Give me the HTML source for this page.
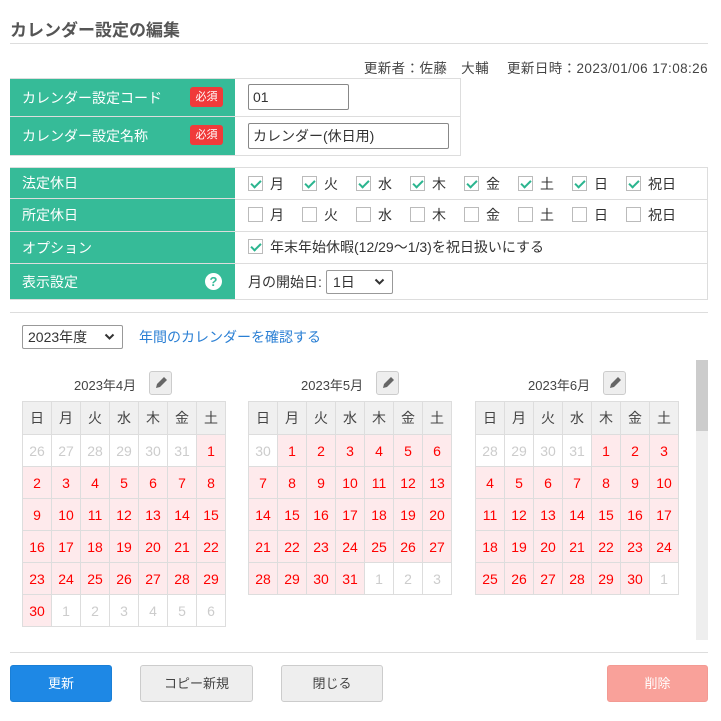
<!DOCTYPE html>
<html><head><meta charset="utf-8"><style>
*{box-sizing:border-box;margin:0;padding:0}
body{width:721px;height:721px;background:#fff;font-family:"Liberation Sans","Noto Sans CJK JP",sans-serif;color:#333;position:relative;overflow:hidden;font-size:13px}
.a{position:absolute}
.lbl{position:absolute;background:#36bb98;color:#fff;font-size:14px;padding-left:12px;display:flex;align-items:center;border-bottom:1px solid #ddd}
.val{position:absolute;border:1px solid #ddd;border-left:none;background:#fff}
.req{position:absolute;background:#f03a3a;color:#fff;font-size:11px;border-radius:3px;width:33px;height:20px;line-height:20px;text-align:center}
.inp{position:absolute;border:1px solid #888;border-radius:2px;height:26px;font-size:14px;padding-left:4px;line-height:24px;background:#fff}
.cb{position:absolute;width:15px;height:15px;border:1px solid #bbb;background:#fff}
.cb.on::after{content:"";position:absolute;left:4px;top:1px;width:4px;height:8px;border:solid #2bb58f;border-width:0 2px 2px 0;transform:rotate(45deg)}
.cbt{position:absolute;font-size:14px;color:#333}
table.cal{position:absolute;border-collapse:collapse;font-size:14px}
table.cal td{width:29px;height:32px;border:1px solid #ddd;text-align:center;color:#f00;background:#feeaec}
table.cal tr.h td{background:#f0f0f0;color:#444;height:33px}
table.cal td.g{color:#ccc;background:#fff}
.mt{position:absolute;font-size:13px;color:#444}
.pen{position:absolute;width:23px;height:24px;border:1px solid #ccc;border-radius:3px;background:#eee}
.btn{position:absolute;top:665px;height:37px;border-radius:3px;font-size:13px;text-align:center;line-height:35px}
.chev{position:absolute;right:7px;top:7px}
</style></head><body>
<div class="a" style="left:10px;top:16px;font-size:17px;font-weight:bold;color:#555">カレンダー設定の編集</div>
<div class="a" style="left:10px;top:43px;width:698px;height:1px;background:#ddd"></div>
<div class="a" style="right:13px;top:57px;font-size:13.5px;letter-spacing:0.4px;color:#444;white-space:pre">更新者：佐藤　大輔　 更新日時：2023/01/06 17:08:26</div>

<div class="lbl" style="left:10px;top:78px;width:225px;height:39px;border-top:1px solid #ddd">カレンダー設定コード</div>
<div class="req" style="left:190px;top:87px">必須</div>
<div class="val" style="left:235px;top:78px;width:226px;height:39px"></div>
<div class="inp" style="left:248px;top:84px;width:101px">01</div>
<div class="lbl" style="left:10px;top:117px;width:225px;height:39px">カレンダー設定名称</div>
<div class="req" style="left:190px;top:125px">必須</div>
<div class="val" style="left:235px;top:116px;width:226px;height:40px"></div>
<div class="inp" style="left:248px;top:123px;width:201px">カレンダー(休日用)</div>

<div class="lbl" style="left:10px;top:167px;width:225px;height:32px;border-top:1px solid #ddd">法定休日</div>
<div class="val" style="left:235px;top:167px;width:473px;height:33px"></div>
<div class="lbl" style="left:10px;top:199px;width:225px;height:33px">所定休日</div>
<div class="val" style="left:235px;top:199px;width:473px;height:33px"></div>
<div class="lbl" style="left:10px;top:232px;width:225px;height:32px">オプション</div>
<div class="val" style="left:235px;top:231px;width:473px;height:33px"></div>
<div class="lbl" style="left:10px;top:264px;width:225px;height:36px">表示設定</div>
<div class="a" style="left:205px;top:273px;width:17px;height:17px;border-radius:50%;background:#fff;color:#36bb98;font-weight:bold;font-size:13px;line-height:17px;text-align:center">?</div>
<div class="val" style="left:235px;top:263px;width:473px;height:37px"></div>

<div class="cb on" style="left:248px;top:176px"></div><div class="cbt" style="left:270px;top:174px">月</div>
<div class="cb on" style="left:302px;top:176px"></div><div class="cbt" style="left:324px;top:174px">火</div>
<div class="cb on" style="left:356px;top:176px"></div><div class="cbt" style="left:378px;top:174px">水</div>
<div class="cb on" style="left:410px;top:176px"></div><div class="cbt" style="left:432px;top:174px">木</div>
<div class="cb on" style="left:464px;top:176px"></div><div class="cbt" style="left:486px;top:174px">金</div>
<div class="cb on" style="left:518px;top:176px"></div><div class="cbt" style="left:540px;top:174px">土</div>
<div class="cb on" style="left:572px;top:176px"></div><div class="cbt" style="left:594px;top:174px">日</div>
<div class="cb on" style="left:626px;top:176px"></div><div class="cbt" style="left:648px;top:174px">祝日</div>

<div class="cb" style="left:248px;top:207px"></div><div class="cbt" style="left:270px;top:205px">月</div>
<div class="cb" style="left:302px;top:207px"></div><div class="cbt" style="left:324px;top:205px">火</div>
<div class="cb" style="left:356px;top:207px"></div><div class="cbt" style="left:378px;top:205px">水</div>
<div class="cb" style="left:410px;top:207px"></div><div class="cbt" style="left:432px;top:205px">木</div>
<div class="cb" style="left:464px;top:207px"></div><div class="cbt" style="left:486px;top:205px">金</div>
<div class="cb" style="left:518px;top:207px"></div><div class="cbt" style="left:540px;top:205px">土</div>
<div class="cb" style="left:572px;top:207px"></div><div class="cbt" style="left:594px;top:205px">日</div>
<div class="cb" style="left:626px;top:207px"></div><div class="cbt" style="left:648px;top:205px">祝日</div>

<div class="cb on" style="left:248px;top:239px"></div><div class="cbt" style="left:270px;top:237px">年末年始休暇(12/29～1/3)を祝日扱いにする</div>
<div class="cbt" style="left:248px;top:272px">月の開始日:</div>
<div class="a" style="left:326px;top:270px;width:67px;height:24px;border:1px solid #999;border-radius:2px;font-size:14px;padding-left:6px;line-height:22px">1日<svg class="chev" width="11" height="8" viewBox="0 0 11 8"><path d="M1.5 1.5l4 4 4-4" stroke="#333" stroke-width="2" fill="none"/></svg></div>

<div class="a" style="left:10px;top:312px;width:698px;height:1px;background:#ddd"></div>
<div class="a" style="left:22px;top:325px;width:101px;height:24px;border:1px solid #999;border-radius:2px;font-size:14px;padding-left:5px;line-height:22px">2023年度<svg class="chev" width="11" height="8" viewBox="0 0 11 8"><path d="M1.5 1.5l4 4 4-4" stroke="#333" stroke-width="2" fill="none"/></svg></div>
<div class="a" style="left:139px;top:327px;font-size:14px;color:#2a7fd4">年間のカレンダーを確認する</div>

<div class="a" style="left:696px;top:360px;width:12px;height:280px;background:#eee"></div>
<div class="a" style="left:696px;top:360px;width:12px;height:71px;background:#ccc"></div>

<div class="mt" style="left:74px;top:375px">2023年4月</div>
<div class="pen" style="left:149px;top:371px"><svg width="21" height="22" viewBox="0 0 21 22"><path d="M6 16l1-4 7-7 3 3-7 7z" fill="#666"/></svg></div>
<table class="cal" style="left:22px;top:401px">
<tr class="h"><td>日</td><td>月</td><td>火</td><td>水</td><td>木</td><td>金</td><td>土</td></tr>
<tr><td class="g">26</td><td class="g">27</td><td class="g">28</td><td class="g">29</td><td class="g">30</td><td class="g">31</td><td>1</td></tr>
<tr><td>2</td><td>3</td><td>4</td><td>5</td><td>6</td><td>7</td><td>8</td></tr>
<tr><td>9</td><td>10</td><td>11</td><td>12</td><td>13</td><td>14</td><td>15</td></tr>
<tr><td>16</td><td>17</td><td>18</td><td>19</td><td>20</td><td>21</td><td>22</td></tr>
<tr><td>23</td><td>24</td><td>25</td><td>26</td><td>27</td><td>28</td><td>29</td></tr>
<tr><td>30</td><td class="g">1</td><td class="g">2</td><td class="g">3</td><td class="g">4</td><td class="g">5</td><td class="g">6</td></tr>
</table>

<div class="mt" style="left:301px;top:375px">2023年5月</div>
<div class="pen" style="left:376px;top:371px"><svg width="21" height="22" viewBox="0 0 21 22"><path d="M6 16l1-4 7-7 3 3-7 7z" fill="#666"/></svg></div>
<table class="cal" style="left:248px;top:401px">
<tr class="h"><td>日</td><td>月</td><td>火</td><td>水</td><td>木</td><td>金</td><td>土</td></tr>
<tr><td class="g">30</td><td>1</td><td>2</td><td>3</td><td>4</td><td>5</td><td>6</td></tr>
<tr><td>7</td><td>8</td><td>9</td><td>10</td><td>11</td><td>12</td><td>13</td></tr>
<tr><td>14</td><td>15</td><td>16</td><td>17</td><td>18</td><td>19</td><td>20</td></tr>
<tr><td>21</td><td>22</td><td>23</td><td>24</td><td>25</td><td>26</td><td>27</td></tr>
<tr><td>28</td><td>29</td><td>30</td><td>31</td><td class="g">1</td><td class="g">2</td><td class="g">3</td></tr>
</table>

<div class="mt" style="left:528px;top:375px">2023年6月</div>
<div class="pen" style="left:603px;top:371px"><svg width="21" height="22" viewBox="0 0 21 22"><path d="M6 16l1-4 7-7 3 3-7 7z" fill="#666"/></svg></div>
<table class="cal" style="left:475px;top:401px">
<tr class="h"><td>日</td><td>月</td><td>火</td><td>水</td><td>木</td><td>金</td><td>土</td></tr>
<tr><td class="g">28</td><td class="g">29</td><td class="g">30</td><td class="g">31</td><td>1</td><td>2</td><td>3</td></tr>
<tr><td>4</td><td>5</td><td>6</td><td>7</td><td>8</td><td>9</td><td>10</td></tr>
<tr><td>11</td><td>12</td><td>13</td><td>14</td><td>15</td><td>16</td><td>17</td></tr>
<tr><td>18</td><td>19</td><td>20</td><td>21</td><td>22</td><td>23</td><td>24</td></tr>
<tr><td>25</td><td>26</td><td>27</td><td>28</td><td>29</td><td>30</td><td class="g">1</td></tr>
</table>

<div class="a" style="left:10px;top:652px;width:698px;height:1px;background:#ddd"></div>
<div class="btn" style="left:10px;width:102px;background:#1e88e5;color:#fff;border:1px solid #1a7fd6">更新</div>
<div class="btn" style="left:140px;width:113px;background:#eee;border:1px solid #ccc;color:#444">コピー新規</div>
<div class="btn" style="left:281px;width:102px;background:#eee;border:1px solid #ccc;color:#444">閉じる</div>
<div class="btn" style="left:607px;width:101px;background:#f9a19a;color:#fff;border:1px solid #f39a93">削除</div>
</body></html>
